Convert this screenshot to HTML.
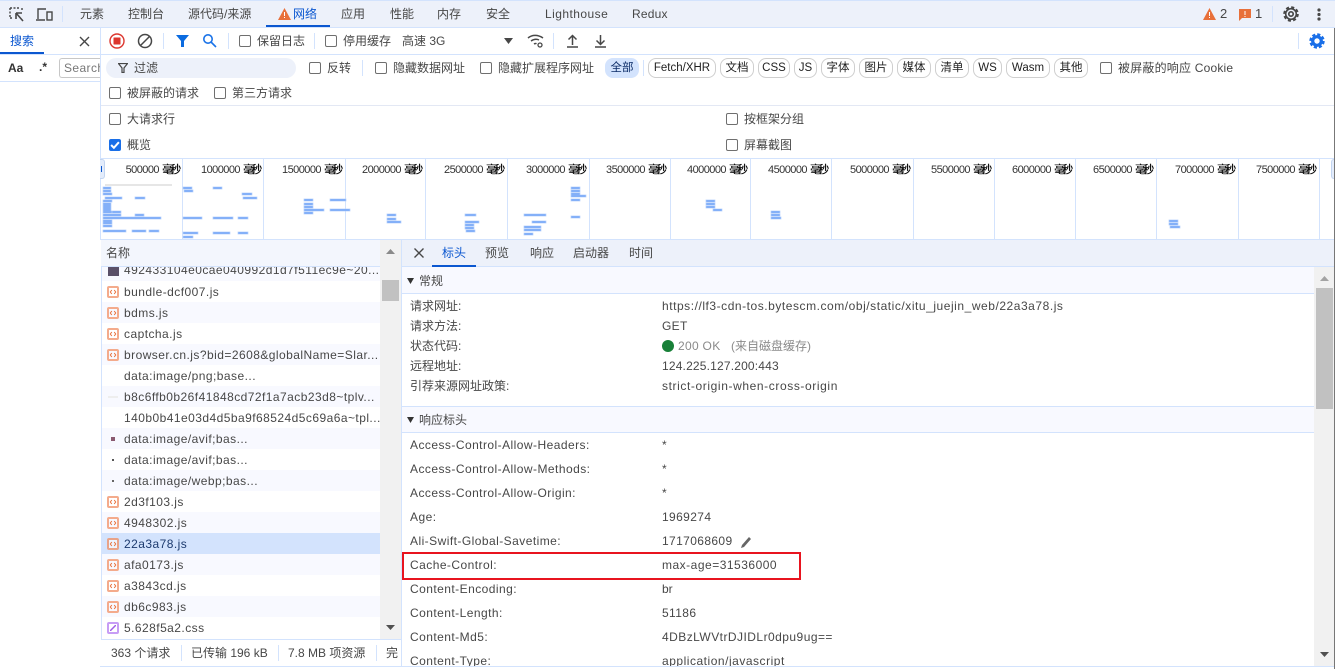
<!DOCTYPE html>
<html lang="zh"><head><meta charset="utf-8"><title>DevTools</title>
<style>
html,body{margin:0;padding:0;background:#fff;overflow:hidden}
#p{position:relative;width:1335px;height:669px;overflow:hidden;background:#fff;font:12px/16px "Liberation Sans","Noto Sans CJK SC",sans-serif;color:#474747}
#p div,#p span.t,#p svg{position:absolute}
.t{position:absolute;white-space:nowrap;letter-spacing:0}
.cb{width:10px;height:10px;border:1px solid #6f6f6f;border-radius:2px;background:#fff}
.ch{height:20px;top:58px;border:1px solid #cfcfcf;border-radius:8px;box-sizing:border-box;line-height:18px;text-align:center;color:#1f1f1f;font-size:11.5px}
.ml{font-size:11px;color:#333;text-align:right;width:79px;top:162px;letter-spacing:-.55px}
.ml i{font-style:normal;letter-spacing:-3px;margin-right:3px;margin-left:.5px;color:#111;text-shadow:.4px 0 #111}
.vl{top:158px;width:1px;height:81px;background:#d3e3fd}
.sep{width:1px;background:#d3e3fd}
.row{left:102px;width:278px;height:21px}
.js{left:107px}
.n{left:124px;color:#474747;letter-spacing:.45px}
</style></head><body><div id="p">
<!-- top bar -->
<div style="left:0;top:0;width:1335px;height:26px;background:#edf1fa;border-top:1px solid #d3e3fd;border-bottom:1px solid #d3e3fd"></div>
<svg style="left:8px;top:6px" width="18" height="18" viewBox="0 0 18 18" fill="none" stroke="#474747" stroke-width="1.4"><path d="M2 2h9M2 2v10M2 12h2M14 2v2" stroke-dasharray="2 1.5"/><path d="M8 7h6M8 7v6M8 7l7 8" stroke-width="1.6"/></svg>
<svg style="left:35px;top:6px" width="20" height="17" viewBox="0 0 20 17" fill="none" stroke="#474747" stroke-width="1.4"><path d="M3 13V3h8M1 14h9"/><rect x="12" y="6" width="5" height="8"/></svg>
<div class="sep" style="left:62px;top:6px;height:16px"></div>
<span class="t" style="left:80px;top:6px">元素</span>
<span class="t" style="left:128px;top:6px">控制台</span>
<span class="t" style="left:188px;top:6px">源代码/来源</span>
<svg style="left:278px;top:8px" width="13" height="12" viewBox="0 0 13 12"><path d="M6.500 0L13 12H0z" fill="#e8703a"/><path d="M6 4h1v4H6zM6 9h1v1H6z" fill="#fff"/></svg>
<span class="t" style="left:293px;top:6px;color:#0b57d0">网络</span>
<div style="left:266px;top:25px;width:64px;height:2px;background:#0b57d0"></div>
<span class="t" style="left:341px;top:6px">应用</span>
<span class="t" style="left:390px;top:6px">性能</span>
<span class="t" style="left:437px;top:6px">内存</span>
<span class="t" style="left:486px;top:6px">安全</span>
<span class="t" style="left:545px;top:6px;letter-spacing:.45px">Lighthouse</span>
<span class="t" style="left:632px;top:6px;letter-spacing:.2px">Redux</span>
<svg style="left:1203px;top:8px" width="13" height="12" viewBox="0 0 13 12"><path d="M6.500 0L13 12H0z" fill="#e8703a"/><path d="M6 4h1v4H6zM6 9h1v1H6z" fill="#fff"/></svg>
<span class="t" style="left:1220px;top:6px;font-size:13px">2</span>
<svg style="left:1239px;top:9px" width="12" height="12" viewBox="0 0 12 12"><path d="M0 0h12v9H3l-3 3z" fill="#e8703a"/><path d="M5.500 2h1v4h-1zM5.500 7h1v1h-1z" fill="#fff"/></svg>
<span class="t" style="left:1255px;top:6px;font-size:13px">1</span>
<div class="sep" style="left:1272px;top:6px;height:16px"></div>
<svg style="left:1283px;top:6px" width="16" height="16" viewBox="0 0 16 16" fill="none" stroke="#474747"><circle cx="8" cy="8" r="6.600" stroke-width="2.400" stroke-dasharray="3 2.180"/><circle cx="8" cy="8" r="5.300" stroke-width="1.600"/><circle cx="8" cy="8" r="2.200" stroke-width="1.700"/></svg>
<svg style="left:1317px;top:8px" width="4" height="13" viewBox="0 0 4 13" fill="#474747"><circle cx="2" cy="2" r="1.600"/><circle cx="2" cy="6.500" r="1.600"/><circle cx="2" cy="11" r="1.600"/></svg>

<!-- sidebar -->
<div style="left:100px;top:28px;width:1px;height:130px;background:#d3e3fd"></div>
<span class="t" style="left:10px;top:33px;color:#0b57d0">搜索</span>
<div style="left:0;top:52px;width:44px;height:2px;background:#0b57d0"></div>
<svg style="left:79px;top:36px" width="11" height="11" viewBox="0 0 11 11" stroke="#474747" stroke-width="1.400"><path d="M1 1l9 9M10 1l-9 9"/></svg>
<div style="left:0;top:54px;width:1335px;height:1px;background:#d3e3fd"></div>
<span class="t" style="left:8px;top:60px;font-weight:bold;color:#333">Aa</span>
<span class="t" style="left:39px;top:59px;font-weight:bold;color:#333">.*</span>
<div style="left:59px;top:58px;width:41px;height:20px;border:1px solid #c7c7c7;border-right:0;border-radius:3px 0 0 3px;box-sizing:border-box;overflow:hidden"><span class="t" style="left:4px;top:1px;color:#777;letter-spacing:.4px">Search</span></div>
<div style="left:0;top:81px;width:100px;height:1px;background:#d3e3fd"></div>

<!-- toolbar -->
<svg style="left:109px;top:33px" width="16" height="16" viewBox="0 0 16 16"><circle cx="8" cy="8" r="7" fill="#fff" stroke="#dc362e" stroke-width="1.400"/><rect x="4.500" y="4.500" width="7" height="7" rx=".5" fill="#dc362e"/></svg>
<svg style="left:137px;top:33px" width="16" height="16" viewBox="0 0 16 16" fill="none" stroke="#474747" stroke-width="1.500"><circle cx="8" cy="8" r="6.500"/><path d="M3.500 12.500l9-9"/></svg>
<div class="sep" style="left:163px;top:33px;height:16px"></div>
<svg style="left:176px;top:35px" width="13" height="12" viewBox="0 0 13 12"><path d="M0 0h13L8 6v6H5V6z" fill="#0b6be0"/></svg>
<svg style="left:202px;top:33px" width="15" height="15" viewBox="0 0 15 15" fill="none" stroke="#1a73e8" stroke-width="1.600"><circle cx="6" cy="6" r="4.200"/><path d="M9 9l5 5"/></svg>
<div class="sep" style="left:228px;top:33px;height:16px"></div>
<div class="cb" style="left:239px;top:35px"></div>
<span class="t" style="left:257px;top:33px">保留日志</span>
<div class="sep" style="left:314px;top:33px;height:16px"></div>
<div class="cb" style="left:325px;top:35px"></div>
<span class="t" style="left:343px;top:33px">停用缓存</span>
<span class="t" style="left:402px;top:33px">高速 3G</span>
<svg style="left:504px;top:38px" width="9" height="6" viewBox="0 0 9 6"><path d="M0 0h9L4.500 6z" fill="#474747"/></svg>
<svg style="left:527px;top:33px" width="17" height="16" viewBox="0 0 17 16" fill="none" stroke="#474747" stroke-width="1.500"><path d="M1 5c4-3.500 10-3.500 15 0M4 8c3-2 6-2 8-1M7 11c1-.6 2-.6 2.500-.3"/><circle cx="13" cy="12" r="2" stroke-width="1.300"/></svg>
<div class="sep" style="left:553px;top:33px;height:16px"></div>
<svg style="left:566px;top:34px" width="13" height="14" viewBox="0 0 13 14" fill="none" stroke="#474747" stroke-width="1.500"><path d="M6.500 11V2M2.500 5.500l4-4 4 4M1 13h11"/></svg>
<svg style="left:594px;top:34px" width="13" height="14" viewBox="0 0 13 14" fill="none" stroke="#474747" stroke-width="1.500"><path d="M6.500 1v9M2.500 6.500l4 4 4-4M1 13h11"/></svg>
<div class="sep" style="left:1298px;top:33px;height:16px"></div>
<svg style="left:1309px;top:33px" width="16" height="16" viewBox="0 0 16 16" fill="none" stroke="#1a6fe8"><circle cx="8" cy="8" r="6.200" stroke-width="3" stroke-dasharray="3 1.870"/><circle cx="8" cy="8" r="4.300" stroke-width="3.200"/></svg>

<!-- filter row -->
<div style="left:106px;top:58px;width:190px;height:20px;border-radius:10px;background:#edf1fa"></div>
<svg style="left:118px;top:63px" width="10" height="10" viewBox="0 0 10 10"><path d="M.5.500h9L6 5v4.500H4V5z" fill="none" stroke="#474747" stroke-width="1.200"/></svg>
<span class="t" style="left:134px;top:60px">过滤</span>
<div class="cb" style="left:309px;top:62px"></div>
<span class="t" style="left:327px;top:60px">反转</span>
<div class="sep" style="left:362px;top:60px;height:16px"></div>
<div class="cb" style="left:375px;top:62px"></div>
<span class="t" style="left:393px;top:60px">隐藏数据网址</span>
<div class="cb" style="left:480px;top:62px"></div>
<span class="t" style="left:498px;top:60px">隐藏扩展程序网址</span>
<div class="ch" style="left:605px;width:34px;background:#d3e3fd;border-color:#d3e3fd;color:#0a2a66">全部</div>
<div class="sep" style="left:643px;top:60px;height:16px"></div>
<div class="ch" style="left:648px;width:68px">Fetch/XHR</div>
<div class="ch" style="left:720px;width:34px">文档</div>
<div class="ch" style="left:758px;width:32px">CSS</div>
<div class="ch" style="left:794px;width:23px">JS</div>
<div class="ch" style="left:821px;width:34px">字体</div>
<div class="ch" style="left:859px;width:34px">图片</div>
<div class="ch" style="left:897px;width:34px">媒体</div>
<div class="ch" style="left:935px;width:34px">清单</div>
<div class="ch" style="left:973px;width:29px">WS</div>
<div class="ch" style="left:1006px;width:44px">Wasm</div>
<div class="ch" style="left:1054px;width:34px">其他</div>
<div class="cb" style="left:1100px;top:62px"></div>
<span class="t" style="left:1118px;top:60px;letter-spacing:.2px">被屏蔽的响应 Cookie</span>
<div class="cb" style="left:109px;top:87px"></div>
<span class="t" style="left:127px;top:85px">被屏蔽的请求</span>
<div class="cb" style="left:214px;top:87px"></div>
<span class="t" style="left:232px;top:85px">第三方请求</span>
<div style="left:101px;top:105px;width:1234px;height:1px;background:#e3e8f4"></div>
<div class="cb" style="left:109px;top:113px"></div>
<span class="t" style="left:127px;top:111px">大请求行</span>
<div class="cb" style="left:726px;top:113px"></div>
<span class="t" style="left:744px;top:111px">按框架分组</span>
<div style="left:109px;top:139px;width:12px;height:12px;border-radius:2px;background:#1a6fe8"></div>
<svg style="left:110px;top:140px" width="10" height="10" viewBox="0 0 9 9" fill="none" stroke="#fff" stroke-width="1.800"><path d="M1 4.500l2.500 2.500L8 2"/></svg>
<span class="t" style="left:127px;top:137px">概览</span>
<div class="cb" style="left:726px;top:139px"></div>
<span class="t" style="left:744px;top:137px">屏幕截图</span>

<!-- overview -->
<div style="left:100px;top:158px;width:1235px;height:1px;background:#d3e3fd"></div>
<div style="left:100px;top:239px;width:1235px;height:1px;background:#d3e3fd"></div>
<div style="left:100px;top:158px;width:1px;height:82px;background:#d3e3fd"></div>
<div class="vl" style="left:182px"></div><div class="vl" style="left:263px"></div><div class="vl" style="left:345px"></div><div class="vl" style="left:425px"></div><div class="vl" style="left:507px"></div><div class="vl" style="left:589px"></div><div class="vl" style="left:670px"></div><div class="vl" style="left:750px"></div><div class="vl" style="left:831px"></div><div class="vl" style="left:913px"></div><div class="vl" style="left:994px"></div><div class="vl" style="left:1075px"></div><div class="vl" style="left:1156px"></div><div class="vl" style="left:1238px"></div><div class="vl" style="left:1319px"></div>
<span class="t ml" style="left:102px">500000 <i>毫秒</i></span>
<span class="t ml" style="left:183px">1000000 <i>毫秒</i></span>
<span class="t ml" style="left:264px">1500000 <i>毫秒</i></span>
<span class="t ml" style="left:344px">2000000 <i>毫秒</i></span>
<span class="t ml" style="left:426px">2500000 <i>毫秒</i></span>
<span class="t ml" style="left:508px">3000000 <i>毫秒</i></span>
<span class="t ml" style="left:588px">3500000 <i>毫秒</i></span>
<span class="t ml" style="left:669px">4000000 <i>毫秒</i></span>
<span class="t ml" style="left:750px">4500000 <i>毫秒</i></span>
<span class="t ml" style="left:832px">5000000 <i>毫秒</i></span>
<span class="t ml" style="left:913px">5500000 <i>毫秒</i></span>
<span class="t ml" style="left:994px">6000000 <i>毫秒</i></span>
<span class="t ml" style="left:1075px">6500000 <i>毫秒</i></span>
<span class="t ml" style="left:1157px">7000000 <i>毫秒</i></span>
<span class="t ml" style="left:1238px">7500000 <i>毫秒</i></span>
<div style="left:100px;top:159px;width:5px;height:20px;background:#e3ecfb;border:1px solid #c2d4f0;border-left:0;border-radius:0 3px 3px 0;box-sizing:border-box"></div>
<div style="left:101px;top:166px;width:1px;height:6px;background:#0b57d0"></div>
<div style="left:1331px;top:159px;width:4px;height:20px;background:#e3ecfb;border:1px solid #c2d4f0;border-right:0;border-radius:3px 0 0 3px;box-sizing:border-box"></div>
<svg style="left:0;top:0" width="1335" height="669" fill="#669df6" stroke="#b5cffb" stroke-width=".7">
<rect x="105" y="184" width="67" height="2" fill="#e6e6e6" stroke="none"/>
<path d="M103 187h8v2h-8zM103 190h8v2h-8zM103 193h9v2h-9zM105 197h17v2h-17zM135 197h10v2h-10zM103 200h9v2h-9zM103 203h8v2h-8zM103 205h8v2h-8zM103 207h8v2h-8zM103 209h8v2h-8zM103 211h9v2h-9zM112 211h9v2h-9zM103 214h18v2h-18zM135 214h9v2h-9zM103 217h58v2h-58zM103 220h9v2h-9zM103 222h9v2h-9zM103 225h9v2h-9zM103 230h23v2h-23zM132 230h14v2h-14zM149 230h10v2h-10z"/>
<path d="M183 187h9v2h-9zM213 187h9v2h-9zM184 190h9v2h-9zM242 193h10v2h-10zM243 197h14v2h-14zM183 217h19v2h-19zM213 217h20v2h-20zM238 217h10v2h-10zM183 232h15v2h-15zM213 232h17v2h-17zM238 232h10v2h-10zM183 236h10v2h-10z"/>
<path d="M304 199h9v2h-9zM330 199h16v2h-16zM304 203h9v2h-9zM304 206h9v2h-9zM304 209h20v2h-20zM330 209h20v2h-20zM304 212h9v2h-9z"/>
<path d="M387 214h9v2h-9zM387 218h9v2h-9zM387 221h14v2h-14z"/>
<path d="M465 214h11v2h-11zM465 221h14v2h-14zM465 224h9v2h-9zM465 227h9v2h-9zM466 230h9v2h-9z"/>
<path d="M524 214h22v2h-22zM532 221h14v2h-14zM524 226h17v2h-17zM524 229h17v2h-17zM524 233h9v2h-9zM571 187h9v2h-9zM571 190h9v2h-9zM571 193h9v2h-9zM571 195h15v2h-15zM571 199h9v2h-9zM571 216h9v2h-9z"/>
<path d="M706 200h9v2h-9zM706 203h9v2h-9zM706 206h9v2h-9zM713 209h9v2h-9z"/>
<path d="M771 211h9v2h-9zM771 214h9v2h-9zM771 217h10v2h-10z"/>
<path d="M1169 220h9v2h-9zM1169 223h9v2h-9zM1170 226h10v2h-10z"/>
</svg>

<!-- list -->
<div style="left:101px;top:240px;width:279px;height:26px;background:#f3f6fd"></div>
<div style="left:101px;top:266px;width:279px;height:1px;background:#d3e3fd"></div>
<span class="t" style="left:106px;top:245px">名称</span>
<div style="left:102px;top:267px;width:278px;height:14px;background:#f8f9ff"></div>
<div class="row" style="top:302px;background:#f8f9ff"></div>
<div class="row" style="top:344px;background:#f8f9ff"></div>
<div class="row" style="top:386px;background:#f8f9ff"></div>
<div class="row" style="top:428px;background:#f8f9ff"></div>
<div class="row" style="top:470px;background:#f8f9ff"></div>
<div class="row" style="top:512px;background:#f8f9ff"></div>
<div class="row" style="top:533px;background:#d3e3fd"></div>
<div class="row" style="top:554px;background:#f8f9ff"></div>
<div class="row" style="top:596px;background:#f8f9ff"></div>
<div style="left:101px;top:267px;width:1px;height:372px;background:#d3e3fd"></div>
<div style="left:101px;top:267px;width:279px;height:14px;overflow:hidden">
 <div style="left:7px;top:0;width:11px;height:9px;background:#5a5068"></div>
 <span class="t n" style="left:23px;top:-5px">492433104e0cae040992d1d7f511ec9e~20...</span>
</div>
<svg class="js" style="top:286px" width="12" height="12" fill="none"><rect x="1" y="1" width="10" height="10" rx="1" stroke="#f4ab8c" stroke-width="2"/><path d="M4.800 4L3.300 6l1.500 2M7.200 4l1.500 2-1.500 2" stroke="#e8703a"/></svg><span class="t n" style="top:284px">bundle-dcf007.js</span>
<svg class="js" style="top:307px" width="12" height="12" fill="none"><rect x="1" y="1" width="10" height="10" rx="1" stroke="#f4ab8c" stroke-width="2"/><path d="M4.800 4L3.300 6l1.500 2M7.200 4l1.500 2-1.500 2" stroke="#e8703a"/></svg><span class="t n" style="top:305px">bdms.js</span>
<svg class="js" style="top:328px" width="12" height="12" fill="none"><rect x="1" y="1" width="10" height="10" rx="1" stroke="#f4ab8c" stroke-width="2"/><path d="M4.800 4L3.300 6l1.500 2M7.200 4l1.500 2-1.500 2" stroke="#e8703a"/></svg><span class="t n" style="top:326px">captcha.js</span>
<svg class="js" style="top:349px" width="12" height="12" fill="none"><rect x="1" y="1" width="10" height="10" rx="1" stroke="#f4ab8c" stroke-width="2"/><path d="M4.800 4L3.300 6l1.500 2M7.200 4l1.500 2-1.500 2" stroke="#e8703a"/></svg><span class="t n" style="top:347px">browser.cn.js?bid=2608&amp;globalName=Slar...</span>
<span class="t n" style="top:368px">data:image/png;base...</span>
<div style="left:108px;top:396px;width:10px;height:2px;background:#eee"></div><span class="t n" style="top:389px">b8c6ffb0b26f41848cd72f1a7acb23d8~tplv...</span>
<span class="t n" style="top:410px">140b0b41e03d4d5ba9f68524d5c69a6a~tpl...</span>
<div style="left:111px;top:437px;width:4px;height:4px;background:#8a5a70"></div><span class="t n" style="top:431px">data:image/avif;bas...</span>
<div style="left:112px;top:459px;width:2px;height:2px;background:#555"></div><span class="t n" style="top:452px">data:image/avif;bas...</span>
<div style="left:112px;top:480px;width:2px;height:2px;background:#666"></div><span class="t n" style="top:473px">data:image/webp;bas...</span>
<svg class="js" style="top:496px" width="12" height="12" fill="none"><rect x="1" y="1" width="10" height="10" rx="1" stroke="#f4ab8c" stroke-width="2"/><path d="M4.800 4L3.300 6l1.500 2M7.200 4l1.500 2-1.500 2" stroke="#e8703a"/></svg><span class="t n" style="top:494px">2d3f103.js</span>
<svg class="js" style="top:517px" width="12" height="12" fill="none"><rect x="1" y="1" width="10" height="10" rx="1" stroke="#f4ab8c" stroke-width="2"/><path d="M4.800 4L3.300 6l1.500 2M7.200 4l1.500 2-1.500 2" stroke="#e8703a"/></svg><span class="t n" style="top:515px">4948302.js</span>
<svg class="js" style="top:538px" width="12" height="12" fill="none"><rect x="1" y="1" width="10" height="10" rx="1" stroke="#e9a388" stroke-width="2" fill="#eef3fd"/><path d="M4.800 4L3.300 6l1.500 2M7.200 4l1.500 2-1.500 2" stroke="#e8703a"/></svg><span class="t n" style="top:536px;color:#1c3a6e">22a3a78.js</span>
<svg class="js" style="top:559px" width="12" height="12" fill="none"><rect x="1" y="1" width="10" height="10" rx="1" stroke="#f4ab8c" stroke-width="2"/><path d="M4.800 4L3.300 6l1.500 2M7.200 4l1.500 2-1.500 2" stroke="#e8703a"/></svg><span class="t n" style="top:557px">afa0173.js</span>
<svg class="js" style="top:580px" width="12" height="12" fill="none"><rect x="1" y="1" width="10" height="10" rx="1" stroke="#f4ab8c" stroke-width="2"/><path d="M4.800 4L3.300 6l1.500 2M7.200 4l1.500 2-1.500 2" stroke="#e8703a"/></svg><span class="t n" style="top:578px">a3843cd.js</span>
<svg class="js" style="top:601px" width="12" height="12" fill="none"><rect x="1" y="1" width="10" height="10" rx="1" stroke="#f4ab8c" stroke-width="2"/><path d="M4.800 4L3.300 6l1.500 2M7.200 4l1.500 2-1.500 2" stroke="#e8703a"/></svg><span class="t n" style="top:599px">db6c983.js</span>
<div style="left:107px;top:622px;width:12px;height:12px;border:2px solid #c79df5;box-sizing:border-box;border-radius:2px"></div>
<svg style="left:110px;top:625px" width="6" height="6"><path d="M0 6L6 0" stroke="#a060e8" stroke-width="1.500"/></svg>
<span class="t n" style="top:620px">5.628f5a2.css</span>
<div style="left:380px;top:240px;width:21px;height:399px;background:#f1f1f1"></div>
<div style="left:382px;top:280px;width:17px;height:21px;background:#c1c1c1"></div>
<svg style="left:386px;top:249px" width="9" height="5"><path d="M0 5L4.500 0 9 5z" fill="#8a8a8a"/></svg>
<svg style="left:386px;top:625px" width="9" height="5"><path d="M0 0L4.500 5 9 0z" fill="#505050"/></svg>
<div style="left:401px;top:240px;width:1px;height:426px;background:#d3e3fd"></div>
<div style="left:101px;top:639px;width:300px;height:1px;background:#d3e3fd"></div>
<span class="t" style="left:111px;top:645px">363 个请求</span>
<div class="sep" style="left:181px;top:645px;height:16px"></div>
<span class="t" style="left:191px;top:645px">已传输 196 kB</span>
<div class="sep" style="left:278px;top:645px;height:16px"></div>
<span class="t" style="left:288px;top:645px">7.8 MB 项资源</span>
<div class="sep" style="left:376px;top:645px;height:16px"></div>
<span class="t" style="left:386px;top:645px">完</span>
<div style="left:100px;top:666px;width:1235px;height:1px;background:#d3e3fd"></div>

<!-- details -->
<div style="left:402px;top:240px;width:932px;height:26px;background:#edf1fa"></div>
<div style="left:402px;top:266px;width:932px;height:1px;background:#d3e3fd"></div>
<svg style="left:414px;top:248px" width="10" height="10" stroke="#474747" stroke-width="1.400"><path d="M.5.500l9 9M9.500.500l-9 9"/></svg>
<span class="t" style="left:442px;top:245px;color:#0b57d0">标头</span>
<div style="left:432px;top:265px;width:44px;height:2px;background:#0b57d0"></div>
<span class="t" style="left:485px;top:245px">预览</span>
<span class="t" style="left:530px;top:245px">响应</span>
<span class="t" style="left:573px;top:245px">启动器</span>
<span class="t" style="left:629px;top:245px">时间</span>

<div style="left:402px;top:267px;width:912px;height:26px;background:#f8f9ff"></div>
<div style="left:402px;top:293px;width:912px;height:1px;background:#d3e3fd"></div>
<svg style="left:407px;top:278px" width="7" height="6"><path d="M0 0h7L3.500 6z" fill="#333"/></svg>
<span class="t" style="left:419px;top:273px">常规</span>
<span class="t" style="left:410px;top:298px">请求网址:</span><span class="t" style="left:662px;top:298px;letter-spacing:.54px">https://lf3-cdn-tos.bytescm.com/obj/static/xitu_juejin_web/22a3a78.js</span>
<span class="t" style="left:410px;top:318px">请求方法:</span><span class="t" style="left:662px;top:318px;letter-spacing:.3px">GET</span>
<span class="t" style="left:410px;top:338px">状态代码:</span>
<div style="left:662px;top:340px;width:12px;height:12px;border-radius:6px;background:#188038"></div>
<span class="t" style="left:678px;top:338px;color:#8a8a8a;letter-spacing:.3px">200 OK</span>
<span class="t" style="left:731px;top:338px;color:#8a8a8a">(来自磁盘缓存)</span>
<span class="t" style="left:410px;top:358px">远程地址:</span><span class="t" style="left:662px;top:358px;letter-spacing:.18px">124.225.127.200:443</span>
<span class="t" style="left:410px;top:378px">引荐来源网址政策:</span><span class="t" style="left:662px;top:378px;letter-spacing:.6px">strict-origin-when-cross-origin</span>

<div style="left:402px;top:406px;width:912px;height:1px;background:#d3e3fd"></div>
<div style="left:402px;top:407px;width:912px;height:25px;background:#f8f9ff"></div>
<div style="left:402px;top:432px;width:912px;height:1px;background:#d3e3fd"></div>
<svg style="left:407px;top:417px" width="7" height="6"><path d="M0 0h7L3.500 6z" fill="#333"/></svg>
<span class="t" style="left:419px;top:412px">响应标头</span>
<span class="t" style="left:410px;top:437px;letter-spacing:.45px">Access-Control-Allow-Headers:</span><span class="t" style="left:662px;top:437px">*</span>
<span class="t" style="left:410px;top:461px;letter-spacing:.45px">Access-Control-Allow-Methods:</span><span class="t" style="left:662px;top:461px">*</span>
<span class="t" style="left:410px;top:485px;letter-spacing:.45px">Access-Control-Allow-Origin:</span><span class="t" style="left:662px;top:485px">*</span>
<span class="t" style="left:410px;top:509px;letter-spacing:.45px">Age:</span><span class="t" style="left:662px;top:509px;letter-spacing:.38px">1969274</span>
<span class="t" style="left:410px;top:533px;letter-spacing:.45px">Ali-Swift-Global-Savetime:</span><span class="t" style="left:662px;top:533px;letter-spacing:.38px">1717068609</span>
<svg style="left:740px;top:536px" width="12" height="13" viewBox="0 0 12 13"><path d="M9 1l2 2-7 8-3 1 1-3z" fill="#666"/></svg>
<span class="t" style="left:410px;top:557px;letter-spacing:.45px">Cache-Control:</span><span class="t" style="left:662px;top:557px;letter-spacing:.5px">max-age=31536000</span>
<div style="left:402px;top:552px;width:399px;height:28px;border:2px solid #e8141f;box-sizing:border-box"></div>
<span class="t" style="left:410px;top:581px;letter-spacing:.45px">Content-Encoding:</span><span class="t" style="left:662px;top:581px">br</span>
<span class="t" style="left:410px;top:605px;letter-spacing:.45px">Content-Length:</span><span class="t" style="left:662px;top:605px;letter-spacing:.38px">51186</span>
<span class="t" style="left:410px;top:629px;letter-spacing:.45px">Content-Md5:</span><span class="t" style="left:662px;top:629px;letter-spacing:.46px">4DBzLWVtrDJIDLr0dpu9ug==</span>
<div style="left:402px;top:650px;width:912px;height:16px;overflow:hidden">
 <span class="t" style="left:8px;top:3px;letter-spacing:.45px">Content-Type:</span><span class="t" style="left:260px;top:3px;letter-spacing:.52px">application/javascript</span>
</div>
<div style="left:1314px;top:267px;width:20px;height:399px;background:#f1f1f1"></div>
<div style="left:1316px;top:288px;width:17px;height:121px;background:#c1c1c1"></div>
<svg style="left:1320px;top:276px" width="9" height="5"><path d="M0 5L4.500 0 9 5z" fill="#a3a3a3"/></svg>
<svg style="left:1320px;top:652px" width="9" height="5"><path d="M0 0L4.500 5 9 0z" fill="#505050"/></svg>
<div style="left:1334px;top:28px;width:1px;height:641px;background:#777"></div>
</div></body></html>
